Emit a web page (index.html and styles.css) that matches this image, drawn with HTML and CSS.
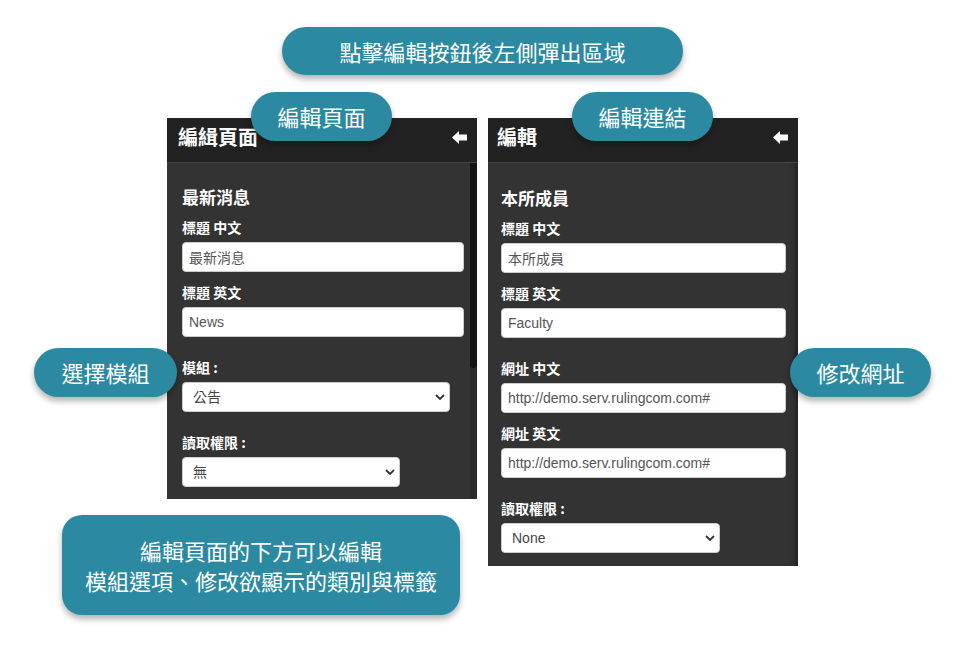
FILE: index.html
```html
<!DOCTYPE html>
<html lang="zh-Hant">
<head>
    <meta charset="UTF-8">
    <meta name="viewport" content="width=device-width, initial-scale=1.0">
    <title>編輯說明</title>
    <link rel="stylesheet" href="styles.css">
</head>
<body>
    <div class="stage">
        <!-- 左側：編輯頁面 -->
        <div class="panel">
            <div class="panel-header">
                <h2 class="panel-title">編緝頁面</h2>
                <svg class="back-icon" viewBox="0 0 15 13" width="15" height="13"><path d="M0 6.5 L7 0 L7 3.5 L15 3.5 L15 9.5 L7 9.5 L7 13 Z" fill="#fff"/></svg>
            </div>
            <div class="panel-body">
                <div class="panel-form form-left">
                    <h3 class="form-heading">最新消息</h3>
                    <div class="field">
                        <label>標題 中文</label>
                        <input type="text" class="text-input" value="最新消息">
                    </div>
                    <div class="field">
                        <label>標題 英文</label>
                        <input type="text" class="text-input" value="News">
                    </div>
                    <div class="field spaced">
                        <label>模組 :</label>
                        <div class="select-box w-268">
                            <select><option>公告</option></select>
                            <svg class="chevron" viewBox="0 0 10 6" width="10" height="6"><path d="M1 1 L5 5 L9 1" fill="none" stroke="#333" stroke-width="1.8"/></svg>
                        </div>
                    </div>
                    <div class="field spaced">
                        <label>讀取權限 :</label>
                        <div class="select-box w-218">
                            <select><option>無</option></select>
                            <svg class="chevron" viewBox="0 0 10 6" width="10" height="6"><path d="M1 1 L5 5 L9 1" fill="none" stroke="#333" stroke-width="1.8"/></svg>
                        </div>
                    </div>
                </div>
                <div class="scrollbar"><div class="scroll-thumb"></div></div>
            </div>
        </div>

        <!-- 右側：編輯連結 -->
        <div class="panel panel-shadow">
            <div class="panel-header">
                <h2 class="panel-title">編輯</h2>
                <svg class="back-icon" viewBox="0 0 15 13" width="15" height="13"><path d="M0 6.5 L7 0 L7 3.5 L15 3.5 L15 9.5 L7 9.5 L7 13 Z" fill="#fff"/></svg>
            </div>
            <div class="panel-body">
                <div class="panel-form form-right">
                    <h3 class="form-heading">本所成員</h3>
                    <div class="field">
                        <label>標題 中文</label>
                        <input type="text" class="text-input" value="本所成員">
                    </div>
                    <div class="field">
                        <label>標題 英文</label>
                        <input type="text" class="text-input" value="Faculty">
                    </div>
                    <div class="field spaced">
                        <label>網址 中文</label>
                        <input type="text" class="text-input" value="http://demo.serv.rulingcom.com#">
                    </div>
                    <div class="field">
                        <label>網址 英文</label>
                        <input type="text" class="text-input" value="http://demo.serv.rulingcom.com#">
                    </div>
                    <div class="field spaced">
                        <label>讀取權限 :</label>
                        <div class="select-box w-219">
                            <select><option>None</option></select>
                            <svg class="chevron" viewBox="0 0 10 6" width="10" height="6"><path d="M1 1 L5 5 L9 1" fill="none" stroke="#333" stroke-width="1.8"/></svg>
                        </div>
                    </div>
                </div>
            </div>
        </div>

        <!-- 說明泡泡 -->
        <div class="bubble bubble-top">點擊編輯按鈕後左側彈出區域</div>
        <div class="bubble bubble-page">編輯頁面</div>
        <div class="bubble bubble-link">編輯連結</div>
        <div class="bubble bubble-module">選擇模組</div>
        <div class="bubble bubble-url">修改網址</div>
        <div class="bubble bubble-note">編輯頁面的下方可以編輯<br>模組選項、修改欲顯示的類別與標籤</div>
    </div>
</body>
</html>
```

FILE: styles.css
```css
* { margin:0; padding:0; box-sizing: border-box; }
body {
    background-color: #fff;
    font-family: "Noto Sans CJK TC", sans-serif;
}
.stage {
    position: relative;
    width: 961px;
    height: 653px;
    padding: 118px 0 0 167px;
    display: flex;
    align-items: flex-start;
    gap: 11px;
}
.panel {
    width: 310px;
    background-color: #333;
}
.panel-shadow {
    box-shadow: inset -7px 0 7px -5px rgba(0,0,0,0.45);
}
.panel-header {
    height: 45px;
    background-color: #222;
    border-bottom: 1px solid #444;
    display: flex;
    align-items: center;
    justify-content: space-between;
    padding: 0 10px 6px 11px;
}
.panel-shadow .panel-header {
    padding-left: 9px;
}
.panel-title {
    color: #fff;
    font-size: 20px;
    font-weight: bold;
    line-height: 26px;
}
.panel-body {
    display: flex;
}
.panel-form {
    flex: 1;
}
.form-left {
    padding: 22px 6px 12px 15px;
}
.form-right {
    padding: 23px 12px 13px 13px;
}
.form-heading {
    color: #fff;
    font-size: 17px;
    font-weight: bold;
    line-height: 24px;
    margin-bottom: 8px;
}
.field {
    margin-bottom: 10px;
}
.field:last-child {
    margin-bottom: 0;
}
.field.spaced {
    margin-top: 20px;
}
.field label {
    display: block;
    color: #fff;
    font-size: 14px;
    font-weight: bold;
    line-height: 20px;
    margin-bottom: 5px;
}
.text-input {
    display: block;
    width: 100%;
    height: 30px;
    border: 1px solid #ccc;
    border-radius: 4px;
    background-color: #fff;
    padding: 0 6px;
    color: #555;
    font-size: 14px;
    font-family: "Liberation Sans", "Noto Sans CJK TC", sans-serif;
    outline: none;
}
.select-box {
    position: relative;
}
.select-box select {
    display: block;
    width: 100%;
    height: 30px;
    border: 1px solid #ccc;
    border-radius: 4px;
    background-color: #fff;
    padding: 0 10px;
    color: #444;
    font-size: 14px;
    font-family: "Liberation Sans", "Noto Sans CJK TC", sans-serif;
    appearance: none;
    -webkit-appearance: none;
    outline: none;
}
.chevron {
    position: absolute;
    right: 5px;
    top: 12px;
}
.w-268 { width: 268px; }
.w-218 { width: 218px; }
.w-219 { width: 219px; }
.scrollbar {
    width: 7px;
    background-color: #2b2b2b;
}
.scroll-thumb {
    height: 205px;
    background-color: #151515;
    border-radius: 0 0 3px 3px;
}
.bubble {
    position: absolute;
    background-color: #2b8aa1;
    color: #fff;
    font-size: 22px;
    font-weight: 400;
    line-height: 49px;
    height: 49px;
    text-align: center;
    border-radius: 25px;
    box-shadow: 0 4px 6px rgba(0,0,0,0.3);
}
.bubble-top {
    left: 282px;
    top: 27px;
    width: 401px;
    height: 48px;
    line-height: 48px;
}
.bubble-page {
    left: 251px;
    top: 92px;
    width: 141px;
}
.bubble-link {
    left: 572px;
    top: 92px;
    width: 141px;
}
.bubble-module {
    left: 34px;
    top: 348px;
    width: 143px;
}
.bubble-url {
    left: 790px;
    top: 348px;
    width: 141px;
}
.bubble-note {
    left: 62px;
    top: 515px;
    width: 398px;
    height: 100px;
    line-height: 30px;
    padding-top: 20px;
    border-radius: 20px;
}
```
